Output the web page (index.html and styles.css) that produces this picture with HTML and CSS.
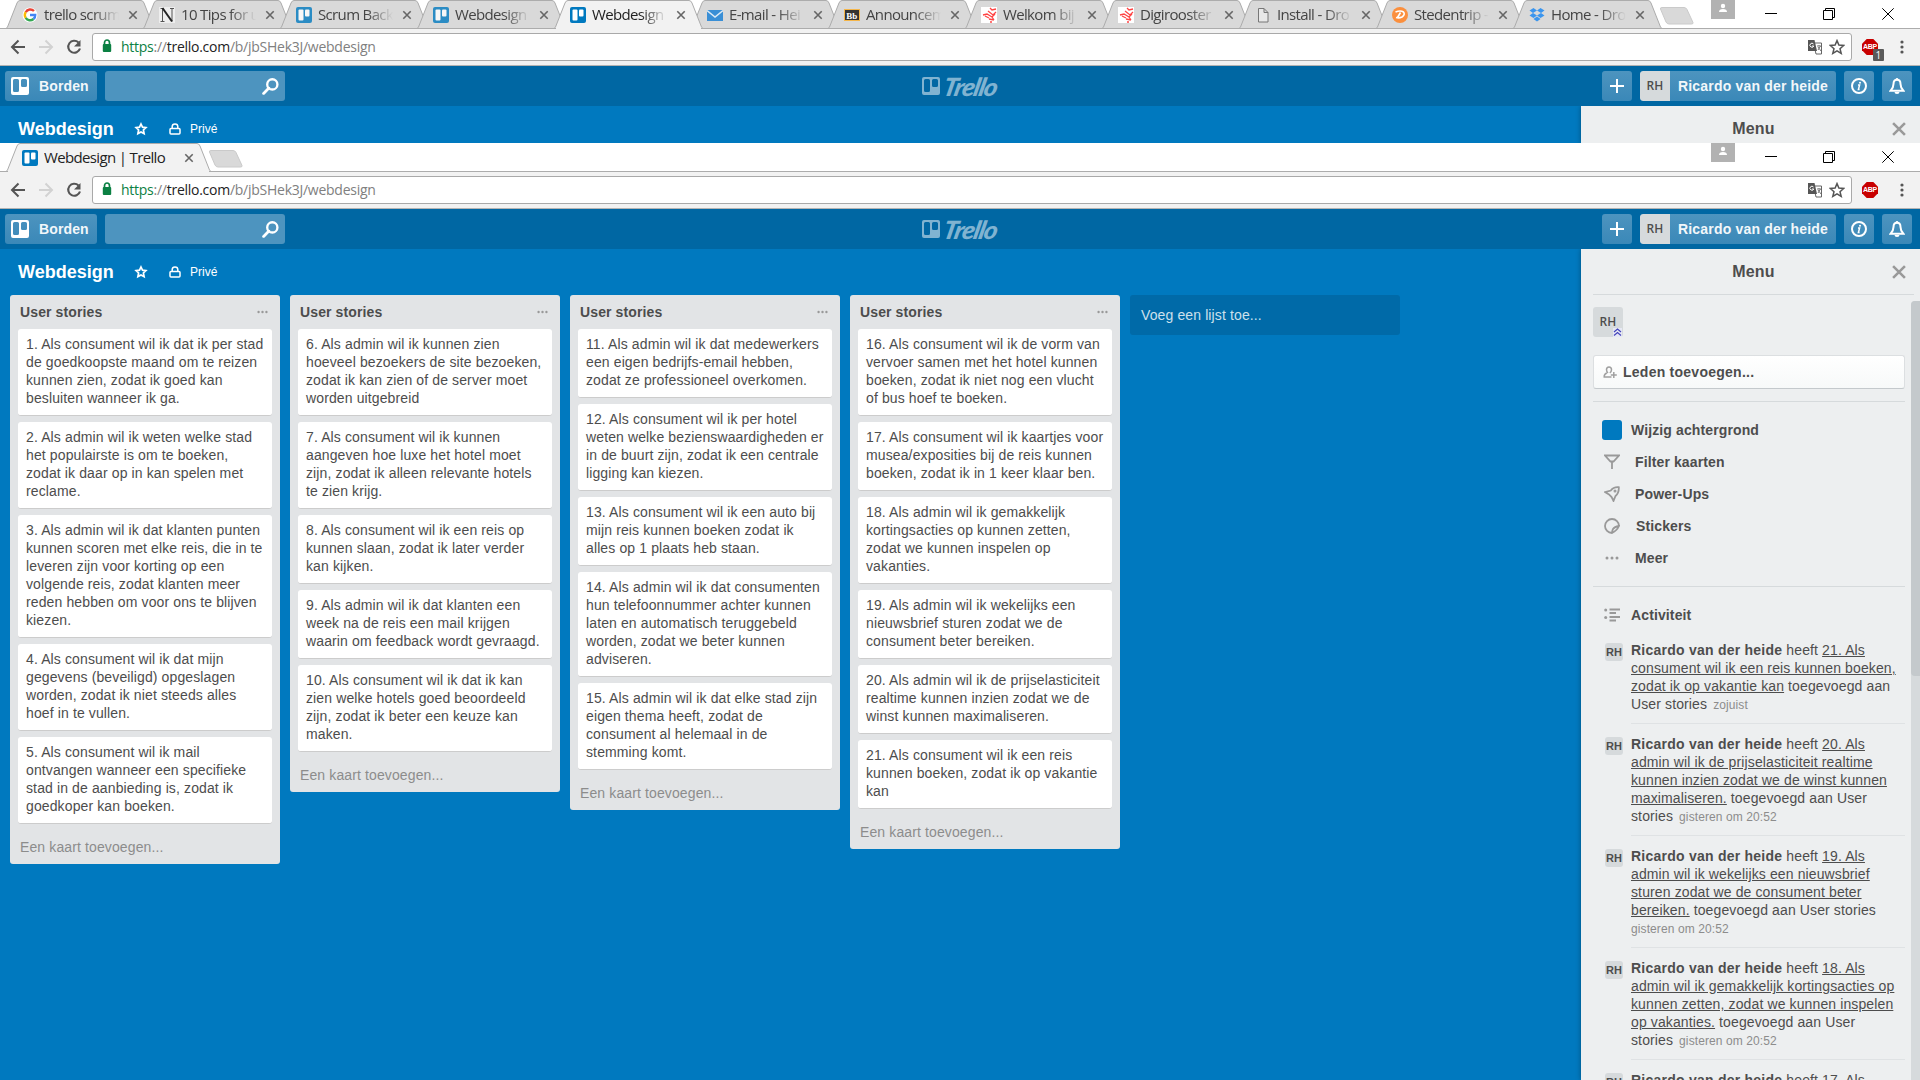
FILE: index.html
```html
<!DOCTYPE html>
<html lang="nl">
<head>
<meta charset="utf-8">
<title>Webdesign | Trello</title>
<link rel="stylesheet" href="styles.css">
</head>
<body>
<svg class="defs" width="0" height="0">
  <defs>
    <symbol id="board" viewBox="0 0 18 18"><path fill-rule="evenodd" d="M2 0h14a2 2 0 0 1 2 2v14a2 2 0 0 1-2 2H2a2 2 0 0 1-2-2V2a2 2 0 0 1 2-2zM3.500 2a1.500 1.500 0 0 0-1.500 1.500v10a1.500 1.500 0 0 0 1.500 1.500h3A1.500 1.500 0 0 0 8 13.500v-10A1.500 1.500 0 0 0 6.500 2zM11.500 2A1.500 1.500 0 0 0 10 3.500v5a1.500 1.500 0 0 0 1.500 1.500h3A1.500 1.500 0 0 0 16 8.500v-5A1.500 1.500 0 0 0 14.500 2z"/></symbol>
    <symbol id="fav" viewBox="0 0 16 16"><rect width="16" height="16" rx="2" fill="#0079bf"/><rect x="2.500" y="2.500" width="5" height="11" rx="1" fill="#fff"/><rect x="9" y="2.500" width="4.500" height="7" rx="1" fill="#fff"/></symbol>
    <symbol id="han" viewBox="0 0 16 16"><rect width="16" height="16" fill="#fff"/><path d="M9 1l2 2 4-1M7 4l5 4 3-3M2 8l4-1 5 3 3-3M4 9l4 2M8 12l5 1M11 10l2 3M9 15l2 0" fill="none" stroke="#f44" stroke-width="1.300"/></symbol>
    <symbol id="x" viewBox="0 0 10 10"><path d="M1.300 1.300l7.400 7.400M8.700 1.300L1.300 8.700" fill="none" stroke="currentColor" stroke-width="1.600"/></symbol>
    <symbol id="tab" viewBox="0 0 149 29"><path d="M0 28.500L1.500 27 11 3Q12 .5 14 .5H135Q137 .5 138 3l9.500 24 1.500 1.500z" stroke="#acacac"/></symbol>
    <symbol id="newtab" viewBox="0 0 36 18"><path d="M3 .5H25Q27 .5 28 2.500l6 13q.5 1.500-1.500 1.500H10q-2 0-3-2L1.500 2Q1 .5 3 .5z" fill="#d9d9d9" stroke="#cacaca"/></symbol>
    <symbol id="back" viewBox="0 0 16 16"><path d="M15 8H2.500M8.500 1.500L2 8l6.500 6.500" fill="none" stroke="currentColor" stroke-width="2"/></symbol>
    <symbol id="reload" viewBox="0 0 16 16"><path d="M12.500 3.500A6 6 0 1 0 14 9.500" fill="none" stroke="#555" stroke-width="2.100"/><path d="M14.500 1v6.500H8z" fill="#555"/></symbol>
    <symbol id="lock" viewBox="0 0 10 14"><path d="M2.500 6V3.700a2.500 2.700 0 0 1 5 0V6" fill="none" stroke="#0b8043" stroke-width="1.700"/><rect x=".8" y="5" width="8.400" height="8" rx="1" fill="#0b8043"/></symbol>
    <symbol id="translate" viewBox="0 0 16 16"><path d="M6.500 4h8v11H9z" fill="#fff" stroke="#666"/><path d="M1 1h6.500L10 12H1z" fill="#555"/><path d="M6.500 5A2 2 0 1 0 6.800 7H5" fill="none" stroke="#fff" stroke-width="1"/><path d="M10 7h4M12 6v1M11 11l2.500-4M11 8l3 4" stroke="#777" fill="none"/></symbol>
    <symbol id="star" viewBox="0 0 16 16"><path d="M8 1.600l1.900 4.500 4.800.4-3.700 3.200 1.200 4.700L8 11.800l-4.200 2.600L5 9.700 1.300 6.500l4.800-.4z" fill="none" stroke="currentColor" stroke-width="1.500"/></symbol>
    <symbol id="bstar" viewBox="0 0 14 14"><path d="M7 2l1.500 3.200 3.400.4-2.500 2.400.7 3.600L7 9.900l-3.100 1.700.7-3.600L2.100 5.600l3.400-.4z" fill="none" stroke="#fff" stroke-width="1.700"/></symbol>
    <symbol id="abp" viewBox="0 0 16 16"><path d="M4.700 0h6.600L16 4.700v6.600L11.300 16H4.700L0 11.300V4.700z" fill="#c80000"/></symbol>
    <symbol id="dots" viewBox="0 0 4 14"><circle cx="2" cy="2" r="1.600"/><circle cx="2" cy="7" r="1.600"/><circle cx="2" cy="12" r="1.600"/></symbol>
    <symbol id="more" viewBox="0 0 14 4"><circle cx="2" cy="2" r="1.500"/><circle cx="7" cy="2" r="1.500"/><circle cx="12" cy="2" r="1.500"/></symbol>
    <symbol id="search" viewBox="0 0 16 16"><circle cx="9.700" cy="6" r="4.800" fill="none" stroke="#fff" stroke-width="2.200"/><path d="M6.500 9.500L1.500 14.500" stroke="#fff" stroke-width="2.600" stroke-linecap="round"/></symbol>
    <symbol id="plus" viewBox="0 0 14 14"><path d="M7 0v14M0 7h14" stroke="#fff" stroke-width="2"/></symbol>
    <symbol id="info" viewBox="0 0 16 16"><circle cx="8" cy="8" r="7" fill="none" stroke="#fff" stroke-width="2"/><path d="M7 7h1.600L7.400 11.500h1.200" fill="none" stroke="#fff" stroke-width="1.500"/><circle cx="9" cy="4.700" r="1" fill="#fff"/></symbol>
    <symbol id="bell" viewBox="0 0 16 16"><path d="M8 1.800c-2.500 0-3.500 2-3.500 4.200C4.500 9.500 3 11 1.500 12.800h13C13 11 11.500 9.500 11.500 6c0-2.200-1-4.200-3.500-4.200z" fill="none" stroke="#fff" stroke-width="2"/><circle cx="8" cy="1.300" r="1.300" fill="#fff"/><path d="M5.500 14h5a2.500 2 0 0 1-5 0z" fill="#fff"/></symbol>
    <symbol id="private" viewBox="0 0 12 12"><path d="M3.200 5V3.500a2.800 2.600 0 0 1 5.600 0V5" fill="none" stroke="#fff" stroke-width="1.500"/><rect x="1" y="5.500" width="10" height="5.500" rx="1" fill="none" stroke="#fff" stroke-width="1.500"/></symbol>
    <symbol id="user" viewBox="0 0 24 19"><circle cx="12" cy="6" r="2.200" fill="#fff"/><path d="M8 12q0-3 4-3t4 3z" fill="#fff"/></symbol>
    <symbol id="min" viewBox="0 0 12 12"><path d="M0 5.500h12" stroke="#000"/></symbol>
    <symbol id="restore" viewBox="0 0 12 12"><path d="M.5 2.500h9v9h-9zM2.500 2.500v-2h9v9h-2" fill="none" stroke="#000"/></symbol>
    <symbol id="close" viewBox="0 0 12 12"><path d="M.3.3l11.400 11.400M11.700.3L.3 11.700" stroke="#000"/></symbol>
  </defs>
</svg>

<section class="window window-back">
  <div class="tabstrip">
    <div class="tab"><svg class="shape"><use href="#tab"/></svg><svg class="favicon" viewBox="0 0 16 16"><circle cx="8" cy="8" r="7.500" fill="#fff"/><g fill="none" stroke-width="2.400"><path d="M12 4a5.200 5.200 0 0 0-8.300 1.200" stroke="#ea4335"/><path d="M3.700 5.200a5.200 5.200 0 0 0 0 5.600" stroke="#fbbc05"/><path d="M3.700 10.800a5.200 5.200 0 0 0 7.800 1.200" stroke="#34a853"/><path d="M11.500 12A5 5 0 0 0 13.200 8H8" stroke="#4285f4"/></g></svg><span class="label">trello scrum</span><svg class="x"><use href="#x"/></svg></div>
    <div class="tab"><svg class="shape"><use href="#tab"/></svg><svg class="favicon" viewBox="0 0 16 16"><rect width="16" height="16" fill="#eee"/><path d="M1.500 1.500h3M11 1.500h4M1.500 14.500h4M13 1v13.500M3.500 1.500v13" stroke="#555" fill="none"/><path d="M3.500 1l9.500 13.500" stroke="#222" stroke-width="2"/></svg><span class="label">10 Tips for u</span><svg class="x"><use href="#x"/></svg></div>
    <div class="tab"><svg class="shape"><use href="#tab"/></svg><svg class="favicon faded"><use href="#fav"/></svg><span class="label">Scrum Back</span><svg class="x"><use href="#x"/></svg></div>
    <div class="tab"><svg class="shape"><use href="#tab"/></svg><svg class="favicon faded"><use href="#fav"/></svg><span class="label">Webdesign</span><svg class="x"><use href="#x"/></svg></div>
    <div class="tab active"><svg class="shape"><use href="#tab"/></svg><svg class="favicon"><use href="#fav"/></svg><span class="label">Webdesign</span><svg class="x"><use href="#x"/></svg></div>
    <div class="tab"><svg class="shape"><use href="#tab"/></svg><svg class="favicon" viewBox="0 0 16 16"><path d="M0 3h16v11H0z" fill="#3a8fd6"/><path d="M0 3.500l8 6.500 8-6.500" fill="none" stroke="#dceaf5" stroke-width="1.500"/></svg><span class="label">E-mail - Hei</span><svg class="x"><use href="#x"/></svg></div>
    <div class="tab"><svg class="shape"><use href="#tab"/></svg><svg class="favicon" viewBox="0 0 16 16"><rect x=".5" y="2.500" width="15" height="11" fill="#333" stroke="#f5b64a"/><text x="2.300" y="11.500" class="bb">Bb</text></svg><span class="label">Announcem</span><svg class="x"><use href="#x"/></svg></div>
    <div class="tab"><svg class="shape"><use href="#tab"/></svg><svg class="favicon"><use href="#han"/></svg><span class="label">Welkom bij</span><svg class="x"><use href="#x"/></svg></div>
    <div class="tab"><svg class="shape"><use href="#tab"/></svg><svg class="favicon"><use href="#han"/></svg><span class="label">Digirooster</span><svg class="x"><use href="#x"/></svg></div>
    <div class="tab"><svg class="shape"><use href="#tab"/></svg><svg class="favicon" viewBox="0 0 16 16"><path d="M3.500 1.500h5.500l4 4v9.500h-9.500zM9 1.500v4h4" fill="#e8e8e8" stroke="#777"/></svg><span class="label">Install - Dro</span><svg class="x"><use href="#x"/></svg></div>
    <div class="tab"><svg class="shape"><use href="#tab"/></svg><svg class="favicon" viewBox="0 0 16 16"><circle cx="8" cy="8" r="8" fill="#fb8f3d"/><path d="M3.500 5q5-2 8 0 2 2.500-1.500 5-3 1.500-6 .5M8.500 5.500l-3 5" fill="none" stroke="#fff" stroke-width="1.600"/></svg><span class="label">Stedentrip -</span><svg class="x"><use href="#x"/></svg></div>
    <div class="tab"><svg class="shape"><use href="#tab"/></svg><svg class="favicon" viewBox="0 0 16 16"><path d="M4.500 1L8 3.500 4 6 .5 3.500zM11.500 1L15.500 3.500 12 6 8 3.500zM.5 8.500L4 6l4 2.500L4.500 11zM8 8.500L12 6l3.500 2.500-4 2.500zM4.500 12L8 9.500l3.500 2.500L8 14.500z" fill="#3a95ee"/></svg><span class="label">Home - Dro</span><svg class="x"><use href="#x"/></svg></div>
    <svg class="newtab"><use href="#newtab"/></svg>
    <div class="controls"><svg class="user"><use href="#user"/></svg><svg class="ctl"><use href="#min"/></svg><svg class="ctl"><use href="#restore"/></svg><svg class="ctl"><use href="#close"/></svg></div>
  </div>
  <div class="toolbar">
    <svg class="nav"><use href="#back"/></svg><svg class="nav forward"><use href="#back"/></svg><svg class="nav"><use href="#reload"/></svg>
    <div class="omnibox"><svg class="lock"><use href="#lock"/></svg><span class="url"><b>https</b>://<i>trello.com</i>/b/jbSHek3J/webdesign</span><svg class="act"><use href="#translate"/></svg><svg class="act"><use href="#star"/></svg></div>
    <div class="abp"><svg><use href="#abp"/></svg><span class="abp-text">ABP</span><span class="badge">1</span></div>
    <svg class="kebab"><use href="#dots"/></svg>
  </div>
  <header class="header">
    <a class="btn boards"><svg><use href="#board"/></svg>Borden</a>
    <div class="btn search"><svg><use href="#search"/></svg></div>
    <div class="logo"><svg><use href="#board"/></svg><span>Trello</span></div>
    <a class="btn sq"><svg class="i14"><use href="#plus"/></svg></a>
    <a class="btn member"><span class="avatar">RH</span>Ricardo van der heide</a>
    <a class="btn sq"><svg class="i16"><use href="#info"/></svg></a>
    <a class="btn sq"><svg class="i16"><use href="#bell"/></svg></a>
  </header>
  <div class="body">
    <div class="board-header"><h1>Webdesign</h1><svg class="bstar"><use href="#bstar"/></svg><svg class="bpriv"><use href="#private"/></svg><span>Privé</span></div>
    <aside class="menu"><div class="menu-head"><h2>Menu</h2><svg><use href="#x"/></svg></div></aside>
  </div>
</section>

<section class="window window-front">
  <div class="tabstrip">
    <div class="tab active wide"><svg class="shape" viewBox="0 0 205 29"><path d="M0 28.500L1.500 27 11 3Q12 .5 14 .5H191Q193 .5 194 3l9.500 24 1.500 1.500z" stroke="#acacac"/></svg><svg class="favicon"><use href="#fav"/></svg><span class="label">Webdesign | Trello</span><svg class="x"><use href="#x"/></svg></div>
    <svg class="newtab"><use href="#newtab"/></svg>
    <div class="controls"><svg class="user"><use href="#user"/></svg><svg class="ctl"><use href="#min"/></svg><svg class="ctl"><use href="#restore"/></svg><svg class="ctl"><use href="#close"/></svg></div>
  </div>
  <div class="toolbar">
    <svg class="nav"><use href="#back"/></svg><svg class="nav forward"><use href="#back"/></svg><svg class="nav"><use href="#reload"/></svg>
    <div class="omnibox"><svg class="lock"><use href="#lock"/></svg><span class="url"><b>https</b>://<i>trello.com</i>/b/jbSHek3J/webdesign</span><svg class="act"><use href="#translate"/></svg><svg class="act"><use href="#star"/></svg></div>
    <div class="abp"><svg><use href="#abp"/></svg><span class="abp-text">ABP</span></div>
    <svg class="kebab"><use href="#dots"/></svg>
  </div>
  <header class="header">
    <a class="btn boards"><svg><use href="#board"/></svg>Borden</a>
    <div class="btn search"><svg><use href="#search"/></svg></div>
    <div class="logo"><svg><use href="#board"/></svg><span>Trello</span></div>
    <a class="btn sq"><svg class="i14"><use href="#plus"/></svg></a>
    <a class="btn member"><span class="avatar">RH</span>Ricardo van der heide</a>
    <a class="btn sq"><svg class="i16"><use href="#info"/></svg></a>
    <a class="btn sq"><svg class="i16"><use href="#bell"/></svg></a>
  </header>
  <div class="body">
    <main class="board">
      <div class="board-header"><h1>Webdesign</h1><svg class="bstar"><use href="#bstar"/></svg><svg class="bpriv"><use href="#private"/></svg><span>Privé</span></div>
      <div class="lists">
        <section class="list">
          <h3>User stories<svg><use href="#more"/></svg></h3>
          <article class="card">1. Als consument wil ik dat ik per stad<br>de goedkoopste maand om te reizen<br>kunnen zien, zodat ik goed kan<br>besluiten wanneer ik ga.</article>
          <article class="card">2. Als admin wil ik weten welke stad<br>het populairste is om te boeken,<br>zodat ik daar op in kan spelen met<br>reclame.</article>
          <article class="card">3. Als admin wil ik dat klanten punten<br>kunnen scoren met elke reis, die in te<br>leveren zijn voor korting op een<br>volgende reis, zodat klanten meer<br>reden hebben om voor ons te blijven<br>kiezen.</article>
          <article class="card">4. Als consument wil ik dat mijn<br>gegevens (beveiligd) opgeslagen<br>worden, zodat ik niet steeds alles<br>hoef in te vullen.</article>
          <article class="card">5. Als consument wil ik mail<br>ontvangen wanneer een specifieke<br>stad in de aanbieding is, zodat ik<br>goedkoper kan boeken.</article>
          <a class="add-card">Een kaart toevoegen...</a>
        </section>
        <section class="list">
          <h3>User stories<svg><use href="#more"/></svg></h3>
          <article class="card">6. Als admin wil ik kunnen zien<br>hoeveel bezoekers de site bezoeken,<br>zodat ik kan zien of de server moet<br>worden uitgebreid</article>
          <article class="card">7. Als consument wil ik kunnen<br>aangeven hoe luxe het hotel moet<br>zijn, zodat ik alleen relevante hotels<br>te zien krijg.</article>
          <article class="card">8. Als consument wil ik een reis op<br>kunnen slaan, zodat ik later verder<br>kan kijken.</article>
          <article class="card">9. Als admin wil ik dat klanten een<br>week na de reis een mail krijgen<br>waarin om feedback wordt gevraagd.</article>
          <article class="card">10. Als consument wil ik dat ik kan<br>zien welke hotels goed beoordeeld<br>zijn, zodat ik beter een keuze kan<br>maken.</article>
          <a class="add-card">Een kaart toevoegen...</a>
        </section>
        <section class="list">
          <h3>User stories<svg><use href="#more"/></svg></h3>
          <article class="card">11. Als admin wil ik dat medewerkers<br>een eigen bedrijfs-email hebben,<br>zodat ze professioneel overkomen.</article>
          <article class="card">12. Als consument wil ik per hotel<br>weten welke bezienswaardigheden er<br>in de buurt zijn, zodat ik een centrale<br>ligging kan kiezen.</article>
          <article class="card">13. Als consument wil ik een auto bij<br>mijn reis kunnen boeken zodat ik<br>alles op 1 plaats heb staan.</article>
          <article class="card">14. Als admin wil ik dat consumenten<br>hun telefoonnummer achter kunnen<br>laten en automatisch teruggebeld<br>worden, zodat we beter kunnen<br>adviseren.</article>
          <article class="card">15. Als admin wil ik dat elke stad zijn<br>eigen thema heeft, zodat de<br>consument al helemaal in de<br>stemming komt.</article>
          <a class="add-card">Een kaart toevoegen...</a>
        </section>
        <section class="list">
          <h3>User stories<svg><use href="#more"/></svg></h3>
          <article class="card">16. Als consument wil ik de vorm van<br>vervoer samen met het hotel kunnen<br>boeken, zodat ik niet nog een vlucht<br>of bus hoef te boeken.</article>
          <article class="card">17. Als consument wil ik kaartjes voor<br>musea/exposities bij de reis kunnen<br>boeken, zodat ik in 1 keer klaar ben.</article>
          <article class="card">18. Als admin wil ik gemakkelijk<br>kortingsacties op kunnen zetten,<br>zodat we kunnen inspelen op<br>vakanties.</article>
          <article class="card">19. Als admin wil ik wekelijks een<br>nieuwsbrief sturen zodat we de<br>consument beter bereiken.</article>
          <article class="card">20. Als admin wil ik de prijselasticiteit<br>realtime kunnen inzien zodat we de<br>winst kunnen maximaliseren.</article>
          <article class="card">21. Als consument wil ik een reis<br>kunnen boeken, zodat ik op vakantie<br>kan</article>
          <a class="add-card">Een kaart toevoegen...</a>
        </section>
        <a class="add-list">Voeg een lijst toe...</a>
      </div>
    </main>
    <aside class="menu">
      <div class="menu-head"><h2>Menu</h2><svg><use href="#x"/></svg></div>
      <div class="menu-body">
        <div class="menu-content">
          <div class="members"><span class="avatar">RH<svg class="admin" viewBox="0 0 9 9"><path d="M0 0h9v9H0z" fill="#e6e8f4"/><path d="M1 4l3.500-3L8 4M1 7.500l3.500-3L8 7.500" fill="none" stroke="#44b" stroke-width="1.200"/></svg></span></div>
          <a class="add-member"><svg viewBox="0 0 14 14"><path d="M8.500 12H1.200q-.3-2.800 2.600-4M6.800 8q1.700-1.200 1.700-3.200A2.500 2.900 0 0 0 3.500 4.800q0 2 1.500 3.200M10.800 7v6M7.800 10h6" fill="none" stroke="#a0a0a0" stroke-width="1.500"/></svg>Leden toevoegen...</a>
          <ul class="nav-list">
            <li><span class="swatch"></span><span>Wijzig achtergrond</span></li>
            <li class="in"><svg viewBox="0 0 16 16"><path d="M1 1.500h14L9.500 7.500h-3zM8 7.500V15" /></svg><span>Filter kaarten</span></li>
            <li class="in"><svg viewBox="0 0 16 16"><path d="M14.800 1.200c-4-.4-6.300 1-8 3.300L1.200 6.200l3.800 2.200 2.600 2.600 1.900 3.900 2-4.900c2.500-2 3.500-4.600 3.300-8.800z" /><circle cx="11" cy="5" r=".6"/></svg><span>Power-Ups</span></li>
            <li class="in st"><svg viewBox="0 0 16 16"><path d="M15 8A7 7 0 1 0 8 15q5-2.500 7-7-4.500.8-6 3-.8 1.500-1 4" /></svg><span>Stickers</span></li>
            <li class="in"><svg class="dots"><use href="#more"/></svg><span>Meer</span></li>
          </ul>
          <h4 class="activity-title"><svg viewBox="0 0 16 14"><path d="M5.500 1.500H16M5.500 5H12M5.500 9H16M5.500 12.500H12" /><circle cx="1.700" cy="2" r="1.500"/><circle cx="1.700" cy="9.500" r="1.500"/></svg>Activiteit</h4>
          <div class="act-item"><span class="avatar sm">RH</span><p><b>Ricardo van der heide</b> heeft <u>21. Als</u><br><u>consument wil ik een reis kunnen boeken,</u><br><u>zodat ik op vakantie kan</u> toegevoegd aan<br>User stories <small>zojuist</small></p></div>
          <div class="act-item"><span class="avatar sm">RH</span><p><b>Ricardo van der heide</b> heeft <u>20. Als</u><br><u>admin wil ik de prijselasticiteit realtime</u><br><u>kunnen inzien zodat we de winst kunnen</u><br><u>maximaliseren.</u> toegevoegd aan User<br>stories <small>gisteren om 20:52</small></p></div>
          <div class="act-item"><span class="avatar sm">RH</span><p><b>Ricardo van der heide</b> heeft <u>19. Als</u><br><u>admin wil ik wekelijks een nieuwsbrief</u><br><u>sturen zodat we de consument beter</u><br><u>bereiken.</u> toegevoegd aan User stories<br><small class="start">gisteren om 20:52</small></p></div>
          <div class="act-item"><span class="avatar sm">RH</span><p><b>Ricardo van der heide</b> heeft <u>18. Als</u><br><u>admin wil ik gemakkelijk kortingsacties op</u><br><u>kunnen zetten, zodat we kunnen inspelen</u><br><u>op vakanties.</u> toegevoegd aan User<br>stories <small>gisteren om 20:52</small></p></div>
          <div class="act-item"><span class="avatar sm">RH</span><p><b>Ricardo van der heide</b> heeft <u>17. Als</u></p></div>
        </div>
        <div class="scroll"><div class="thumb"></div></div>
      </div>
    </aside>
  </div>
</section>
</body>
</html>
```
FILE: styles.css
```css
* { box-sizing: border-box; }
body { margin: 0; width: 1920px; height: 1080px; overflow: hidden; display: flex; flex-direction: column; font: 14px/18px "Liberation Sans", Arial, sans-serif; letter-spacing: .12px; color: #4d4d4d; background: #fff; }
svg { display: block; flex: none; }
h1, h2, h3, h4, p, ul { margin: 0; padding: 0; }
.defs { position: absolute; }
.window { display: flex; flex-direction: column; overflow: hidden; }
.window-back { height: 143px; flex: none; }
.window-front { height: 937px; }

/* browser chrome */
.tabstrip { height: 29px; flex: none; display: flex; padding-left: 6px; background: linear-gradient(#acacac, #acacac) 0 28px / 100% 1px no-repeat #fff; font: 15px/20px "Open Sans", "Noto Sans", sans-serif; letter-spacing: -.65px; }
.tab { position: relative; width: 149px; height: 29px; margin-right: -12px; padding: 0 17px 0 16px; display: flex; align-items: center; color: #444; }
.tab .shape { position: absolute; left: 0; top: 0; width: 100%; height: 29px; fill: #d9d9d9; }
.tab.active { z-index: 2; color: #222; }
.tab.active .shape { fill: #f2f2f2; }
.tab.active::after { content: ""; position: absolute; left: 2px; right: 2px; bottom: 0; height: 1px; background: #f2f2f2; }
.tab.wide { width: 205px; }
.favicon { position: relative; width: 16px; height: 16px; margin-top: 1px; }
.favicon.faded { opacity: .8; }
.bb { font: bold 9px "Liberation Serif", serif; fill: #fff; letter-spacing: 0; }
.label { position: relative; flex: 1; margin: -1px 9px 0 6px; width: 0; overflow: hidden; white-space: nowrap; }
.tab:not(.wide) .label { -webkit-mask-image: linear-gradient(90deg, #000 65%, transparent 100%); mask-image: linear-gradient(90deg, #000 65%, transparent 100%); }
.tab .x { position: relative; width: 10px; height: 10px; margin-top: 1px; color: #666; }
.newtab { width: 36px; height: 18px; margin: 7px 0 0 9px; }
.controls { margin-left: auto; display: flex; }
.controls .user { width: 24px; height: 19px; background: #b2b2b2; margin-right: 30px; }
.ctl { width: 12px; height: 12px; margin: 8px 26px 0 0; }
.ctl + .ctl { margin-left: 20px; }
.ctl + .ctl + .ctl { margin-left: 21px; }
.toolbar { height: 37px; flex: none; background: #f2f2f2; border-bottom: 1px solid #b3b3b3; display: flex; align-items: center; padding: 0 14px 0 10px; }
.nav { width: 16px; height: 16px; margin-right: 12px; color: #555; }
.nav.forward { transform: scaleX(-1); color: #d2d2d2; }
.omnibox { width: 1760px; height: 28px; margin-left: -2px; border: 1px solid #a9a9a9; border-radius: 3px; background: #fff; display: flex; align-items: center; padding: 0 6px 0 9px; }
.lock { width: 10px; height: 14px; margin: -2px 9px 0 0; }
.url { flex: 1; font: 14px/20px "Open Sans", "Noto Sans", sans-serif; letter-spacing: -.26px; color: #808080; }
.url b { font-weight: 400; color: #0b8043; }
.url i { font-style: normal; color: #222; }
.act { width: 16px; height: 16px; color: #555; margin-left: 6px; }
.abp { position: relative; width: 16px; height: 16px; margin-left: 10px; }
.abp svg { width: 16px; height: 16px; }
.abp-text { position: absolute; left: 1px; top: 3px; font: bold 7px/10px "Liberation Sans", sans-serif; letter-spacing: -.3px; color: #fff; }
.badge { position: absolute; left: 11px; top: 10px; width: 11px; height: 12px; border-radius: 1px; background: #5a5a5a; color: #fff; font: 10px/12px "Open Sans", sans-serif; text-align: center; }
.kebab { width: 4px; height: 14px; fill: #555; margin-left: auto; margin-right: 2px; }

/* application header */
.header { position: relative; height: 40px; flex: none; background: #0067a3; display: flex; align-items: center; padding: 0 8px 0 5px; gap: 8px; }
.btn { height: 30px; border-radius: 3px; background: linear-gradient(#4d94bf, #3a88b8); color: #fff; font-weight: 700; display: flex; align-items: center; white-space: nowrap; }
.boards { width: 92px; padding-left: 6px; fill: #fff; color: #f2f7fa; }
.boards svg { width: 18px; height: 18px; margin-right: 10px; }
.search { width: 180px; background: #4d94bf; justify-content: flex-end; padding-right: 6px; margin-right: auto; }
.search svg { width: 17px; height: 17px; }
.logo { position: absolute; left: 922px; top: 7px; display: flex; fill: #80b3d1; color: #80b3d1; }
.logo svg { width: 18px; height: 18px; margin: 4px 4px 0 0; }
.logo span { font: italic 900 25px/26px "Lato", sans-serif; letter-spacing: -1.2px; transform: scaleX(1.04) skewX(-12deg); transform-origin: 0 50%; }
.sq { width: 30px; justify-content: center; }
.i14 { width: 14px; height: 14px; }
.i16 { width: 16px; height: 16px; }
.member { width: 196px; overflow: hidden; color: #f2f7fa; letter-spacing: .18px; }
.avatar { width: 30px; height: 30px; border-radius: 3px; background: #d6dadc; color: #4d4d4d; font: 600 12px/30px "Open Sans", sans-serif; text-align: center; position: relative; display: block; flex: none; }
.member .avatar { border-radius: 3px 0 0 3px; margin-right: 8px; }

/* board */
.body { flex: 1; display: flex; background: #0079bf; min-height: 0; }
.board { flex: 1; display: flex; flex-direction: column; }
.board-header { height: 46px; display: flex; align-items: center; padding: 0 0 1px 18px; color: #fff; font-size: 12px; letter-spacing: 0; flex: none; }
.window-back .board-header { flex: 1; }
.board-header h1 { font-size: 18px; line-height: 24px; width: 116px; }
.bstar { width: 14px; height: 14px; }
.bpriv { width: 12px; height: 12px; margin: 0 9px 0 21px; }
.lists { display: flex; align-items: flex-start; gap: 10px; padding-left: 10px; }
.list { width: 270px; background: #e2e4e6; border-radius: 3px; padding: 0 8px; }
.list h3 { height: 34px; font-size: 14px; line-height: 18px; padding: 8px 4px 0 2px; display: flex; justify-content: space-between; }
.list h3 svg { width: 11px; height: 4px; margin-top: 7px; fill: #999; }
.card { margin-bottom: 6px; padding: 6px 8px 8px; background: #fff; border-bottom: 1px solid #ccc; border-radius: 3px; white-space: nowrap; }
.add-card { display: block; height: 34px; padding: 8px 2px; color: #8c8c8c; }
.add-list { width: 270px; height: 40px; border-radius: 3px; background: #006aa8; color: #cde0ec; padding: 11px; }

/* menu */
.menu { width: 339px; margin-left: auto; background: #edeff0; box-shadow: 0 0 5px rgba(0, 0, 0, .35); display: flex; flex-direction: column; }
.menu-head { height: 46px; flex: none; margin: 0 6px 0 12px; display: flex; align-items: center; border-bottom: 1px solid #d6dadc; }
.menu-head h2 { flex: 1; font-size: 16px; line-height: 20px; text-align: center; padding-left: 23px; }
.menu-head svg { width: 16px; height: 16px; margin-right: 7px; color: #999; }
.window-back .menu-head { border: 0; }
.menu-body { flex: 1; min-height: 0; display: flex; padding-left: 12px; }
.menu-content { width: 312px; }
.members { padding-top: 12px; height: 60px; }
.admin { position: absolute; right: 1px; bottom: 0; width: 9px; height: 9px; }
.add-member { height: 34px; border: 1px solid #dcdfe1; border-bottom-color: #c4c9cc; border-radius: 3px; background: linear-gradient(#fff, #f7f9f9); display: flex; align-items: center; padding-left: 9px; font-weight: 700; letter-spacing: .25px; }
.add-member svg { width: 14px; height: 14px; margin-right: 6px; }
.nav-list { list-style: none; margin-top: 12px; padding: 12px 0 13px 9px; height: 186px; border-top: 1px solid #d6dadc; border-bottom: 1px solid #d6dadc; font-weight: 700; }
.nav-list li { height: 32px; display: flex; align-items: center; gap: 9px; }
.nav-list li.in { gap: 15px; padding-left: 2px; }
.nav-list li.st { gap: 16px; }
.swatch { width: 20px; height: 20px; border-radius: 3px; background: #0079bf; }
.nav-list svg, .activity-title svg { width: 16px; height: 16px; fill: none; stroke: #999; stroke-width: 1.800; }
.nav-list svg.dots { width: 14px; height: 4px; fill: #999; stroke: none; margin: 0 1px; }
.activity-title { display: flex; align-items: center; height: 18px; font-size: 14px; margin: 19px 0 17px; padding-left: 11px; gap: 11px; }
.activity-title svg { height: 14px; }
.activity-title circle { fill: #999; stroke: none; }
.act-item { display: flex; padding-left: 12px; gap: 8px; margin-bottom: 11px; white-space: nowrap; }
.act-item b { letter-spacing: .24px; }
.avatar.sm { width: 18px; height: 18px; margin-top: 2px; font: bold 11px/18px "Liberation Sans", sans-serif; letter-spacing: 0; }
.act-item p { flex: 1; border-bottom: 1px solid #dfe2e4; padding-bottom: 10px; }
.act-item small { font-size: 12px; line-height: 14px; letter-spacing: .1px; color: #8c8c8c; margin-left: 2px; }
.act-item small.start { margin-left: 0; }
.scroll { width: 9px; margin: 6px 0 0 auto; background: #d6dadc; border-radius: 4px 0 0 0; }
.thumb { height: 375px; background: #c4c9cc; border-radius: 4px 0 0 4px; }
```
